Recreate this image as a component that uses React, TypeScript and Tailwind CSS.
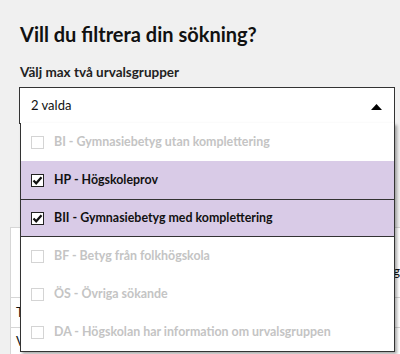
import { useState } from 'react';

// Filterpanel: urvalsgrupper med öppen dropdown

interface Group {
  code: string;
  name: string;
  checked: boolean;
}

const groups: Group[] = [
  { code: 'BI', name: 'Gymnasiebetyg utan komplettering', checked: false },
  { code: 'HP', name: 'Högskoleprov', checked: true },
  { code: 'BII', name: 'Gymnasiebetyg med komplettering', checked: true },
  { code: 'BF', name: 'Betyg från folkhögskola', checked: false },
  { code: 'ÖS', name: 'Övriga sökande', checked: false },
  { code: 'DA', name: 'Högskolan har information om urvalsgruppen', checked: false },
];

function CheckBox({ checked }: { checked: boolean }) {
  if (!checked) {
    return <span className="w-[13px] h-[13px] shrink-0 border border-[#d4d4d4] bg-white" />;
  }
  return (
    <span className="w-[13px] h-[13px] shrink-0 border border-[#222] bg-white flex items-center justify-center">
      <svg width="11" height="11" viewBox="0 0 11 11">
        <path d="M1.5 5.5 L4.2 8.3 L9.5 2.2" fill="none" stroke="#111" strokeWidth="2.2" />
      </svg>
    </span>
  );
}

export default function App() {
  const [open] = useState(true);
  const focused = 'BII';

  return (
    <div className="relative w-[400px] h-[354px] overflow-hidden bg-[#f0f0f0] font-['Lato',sans-serif]">
      {/* Header */}
      <div className="pl-[20px] pt-[23px]">
        <h1 className="text-[20px] leading-[22px] font-bold text-[#111]">Vill du filtrera din sökning?</h1>
        <p className="mt-[19px] text-[13.5px] leading-[16px] font-bold text-[#222]">Välj max två urvalsgrupper</p>
      </div>

      {/* Select */}
      <div className="relative z-10 ml-[19px] mr-[5px] mt-[7px]">
        <div className="h-[37px] border border-[#333] bg-white flex items-center justify-between pl-[11px] pr-[12px]">
          <span className="text-[13px] text-[#111]">2 valda</span>
          <svg width="11" height="6" viewBox="0 0 11 6" className="mt-[2px]">
            <path d="M0 6 L5.5 0 L11 6 Z" fill="#000" />
          </svg>
        </div>

        {open && (
          <ul className="absolute left-[1px] right-0 top-[36px] bg-white border-x border-b border-[#333] shadow-[2px_2px_3px_rgba(0,0,0,0.35)]">
            {groups.map((g) => (
              <li
                key={g.code}
                className={`h-[38px] flex items-center gap-[10px] pl-[10px] text-[12.4px] font-bold ${
                  g.checked ? 'bg-[#d9cbe7] text-[#111]' : 'bg-white text-[#c4c4c4]'
                } ${g.code === focused ? 'border-y border-[#333]' : ''}`}
              >
                <CheckBox checked={g.checked} />
                <span className="whitespace-nowrap">
                  {g.code} - {g.name}
                </span>
              </li>
            ))}
          </ul>
        )}
      </div>

      {/* Tabell bakom dropdown */}
      <div className="ml-[10px] mt-[103px] w-[390px] bg-white border-l border-t border-[#d6d6d6] text-[13px] text-[#111]">
        <div className="h-[69px] flex items-end justify-end pb-[16px]">
          <span>g</span>
        </div>
        <div className="h-[30px] border-t border-[#d6d6d6] flex items-center pl-[5px]">T</div>
        <div className="h-[28px] border-t border-[#d6d6d6] flex items-center pl-[5px]">V</div>
      </div>
    </div>
  );
}
